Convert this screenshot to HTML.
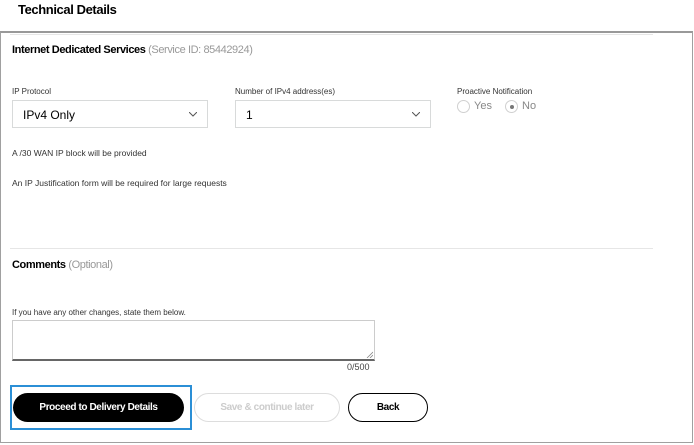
<!DOCTYPE html><html><head><style>
body{margin:0;width:694px;height:445px;background:#fff;font-family:"Liberation Sans",sans-serif;position:relative;overflow:hidden;color:#000}
.a{position:absolute;white-space:nowrap}
.sel{position:absolute;border:1px solid #d8dada;height:28px;box-sizing:border-box;font-size:12px;line-height:28px;padding-left:10px}
.sel svg{position:absolute;right:10px;top:11px}
.rad{position:absolute;width:13px;height:13px;border:1px solid #d0d0d0;border-radius:50%;box-sizing:border-box}
.btn{position:absolute;border-radius:15px;box-sizing:border-box;font-size:10px;font-weight:bold;text-align:center;letter-spacing:-0.4px}
</style></head><body>
<div class="a" style="left:18px;top:2px;font-size:13px;font-weight:bold;letter-spacing:-0.4px">Technical Details</div>
<div class="a" style="left:0;top:31px;width:693px;height:412px;border:1px solid #a0a0a0;border-top:2px solid #999;box-sizing:border-box"></div>
<div class="a" style="left:10px;top:34px;width:643px;height:1px;background:#e6e6e6"></div>
<div class="a" style="left:12px;top:44px;font-size:11px;letter-spacing:-0.4px"><b>Internet Dedicated Services</b> <span style="color:#999">(Service ID: 85442924)</span></div>
<div class="a" style="left:12px;top:87px;font-size:8px;color:#333">IP Protocol</div>
<div class="a" style="left:235px;top:87px;font-size:8px;color:#333">Number of IPv4 address(es)</div>
<div class="a" style="left:457px;top:87px;font-size:8px;color:#333">Proactive Notification</div>
<div class="sel" style="left:12px;top:100px;width:196px">IPv4 Only<svg width="8" height="5"><path d="M0 0L4 4L8 0" fill="none" stroke="#555"/></svg></div>
<div class="sel" style="left:235px;top:100px;width:196px">1<svg width="8" height="5"><path d="M0 0L4 4L8 0" fill="none" stroke="#555"/></svg></div>
<div class="rad" style="left:457px;top:100px"></div>
<div class="a" style="left:474px;top:100px;font-size:11px;color:#888">Yes</div>
<div class="rad" style="left:505px;top:100px"><div style="position:absolute;left:3.5px;top:3.5px;width:4px;height:4px;border-radius:50%;background:#777"></div></div>
<div class="a" style="left:522px;top:100px;font-size:11px;color:#888">No</div>
<div class="a" style="left:12px;top:148px;font-size:8.5px;color:#333">A /30 WAN IP block will be provided</div>
<div class="a" style="left:12px;top:178px;font-size:8.5px;color:#333">An IP Justification form will be required for large requests</div>
<div class="a" style="left:10px;top:248px;width:643px;height:1px;background:#e6e6e6"></div>
<div class="a" style="left:12px;top:259px;font-size:11px;letter-spacing:-0.4px"><b>Comments</b> <span style="color:#999">(Optional)</span></div>
<div class="a" style="left:12px;top:308px;font-size:8px;color:#333">If you have any other changes, state them below.</div>
<div class="a" style="left:12px;top:320px;width:363px;height:41px;border:1px solid #ccc;border-bottom:2px solid #666;box-sizing:border-box"><svg style="position:absolute;right:1px;bottom:1px" width="7" height="7"><path d="M1 7L7 1M4 7L7 4" stroke="#888" stroke-width="0.8"/></svg></div>
<div class="a" style="left:347px;top:362px;font-size:9px;color:#444">0/500</div>
<div class="a" style="left:10px;top:385px;width:182px;height:45px;border:2px solid #2b8fd6;box-sizing:border-box"></div>
<div class="btn" style="left:13px;top:393px;width:171px;height:29px;background:#000;color:#fff;line-height:29px">Proceed to Delivery Details</div>
<div class="btn" style="left:194px;top:393px;width:146px;height:29px;border:1px solid #ddd;color:#ccc;line-height:27px">Save &amp; continue later</div>
<div class="btn" style="left:348px;top:393px;width:80px;height:29px;border:1px solid #000;line-height:27px">Back</div>
</body></html>
